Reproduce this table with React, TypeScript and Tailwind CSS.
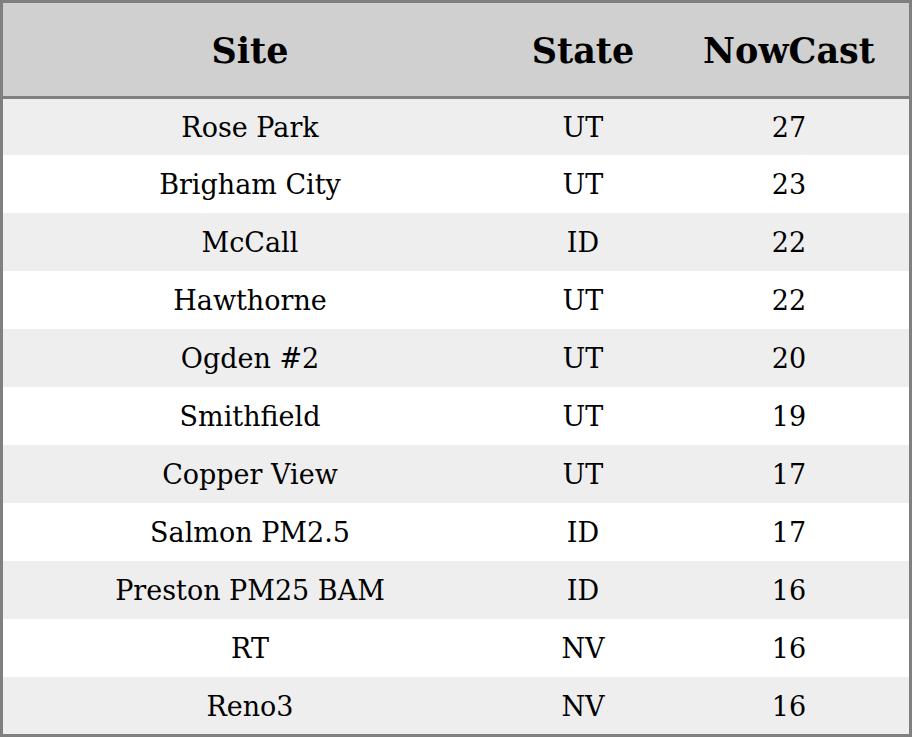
const rows: [string, string, number][] = [
  ["Rose Park", "UT", 27],
  ["Brigham City", "UT", 23],
  ["McCall", "ID", 22],
  ["Hawthorne", "UT", 22],
  ["Ogden #2", "UT", 20],
  ["Smithfield", "UT", 19],
  ["Copper View", "UT", 17],
  ["Salmon PM2.5", "ID", 17],
  ["Preston PM25 BAM", "ID", 16],
  ["RT", "NV", 16],
  ["Reno3", "NV", 16],
];

export default function App() {
  return (
    <div className="h-[737px] w-[912px] bg-white font-['DejaVu_Serif',serif] text-black">
      <div className="flex h-full flex-col border-[3px] border-[#808080]">
        <div className="grid h-[96px] shrink-0 grid-cols-[494px_172px_1fr] items-center border-b-[3px] border-[#808080] bg-[#d0d0d0] pt-[4px] text-[35px] font-bold">
          <div className="text-center">Site</div>
          <div className="text-center">State</div>
          <div className="text-center">NowCast</div>
        </div>
        <div className="flex flex-1 flex-col">
          {rows.map(([site, state, value], i) => {
            const h = i === 0 ? "h-[56px]" : i === rows.length - 1 ? "h-[57px]" : "h-[58px]";
            return (
              <div
                key={site}
                className={`grid shrink-0 grid-cols-[494px_172px_1fr] items-center pt-[3px] text-[27px] ${h} ${
                  i % 2 === 0 ? "bg-[#eeeeee]" : "bg-white"
                }`}
              >
                <div className="text-center">{site}</div>
                <div className="text-center">{state}</div>
                <div className="text-center">{value}</div>
              </div>
            );
          })}
        </div>
      </div>
    </div>
  );
}
